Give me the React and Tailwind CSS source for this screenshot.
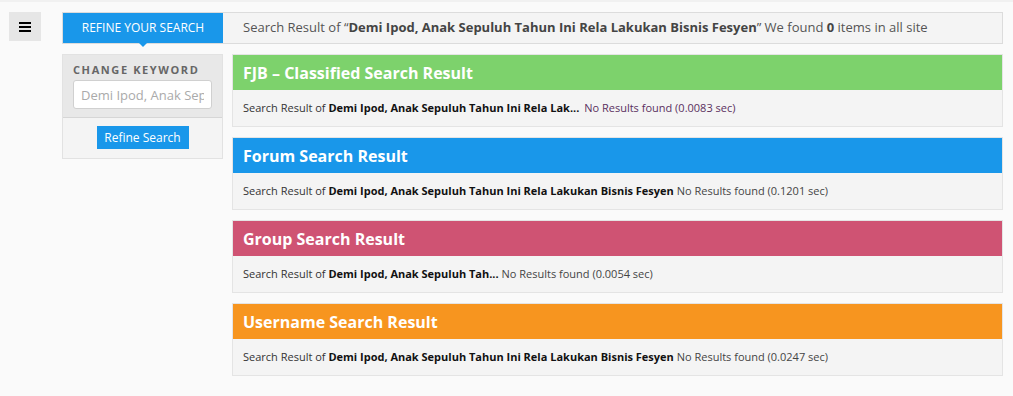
import React from "react";

const cards = [
  { title: "FJB – Classified Search Result", bg: "bg-[#7dd26c]", name: "Demi Ipod, Anak Sepuluh Tahun Ini Rela Lak...", time: "0.0083", purple: true },
  { title: "Forum Search Result", bg: "bg-[#1997ea]", name: "Demi Ipod, Anak Sepuluh Tahun Ini Rela Lakukan Bisnis Fesyen", time: "0.1201" },
  { title: "Group Search Result", bg: "bg-[#cf5373]", name: "Demi Ipod, Anak Sepuluh Tah...", time: "0.0054" },
  { title: "Username Search Result", bg: "bg-[#f7951f]", name: "Demi Ipod, Anak Sepuluh Tahun Ini Rela Lakukan Bisnis Fesyen", time: "0.0247" },
];

export default function App() {
  return (
    <div className="min-h-[396px] bg-[#fafafa] font-['Open_Sans',sans-serif] text-[#333]">
      <div className="h-[2px] bg-[#f1f1f1]" />
      <div className="flex pt-[10px]">
        <div className="ml-[9px] flex h-[29px] w-[32px] flex-col items-center justify-center gap-[2px] bg-[#e6e6e6]">
          <span className="block h-[2px] w-[12px] bg-black" />
          <span className="block h-[2px] w-[12px] bg-black" />
          <span className="block h-[2px] w-[12px] bg-black" />
        </div>
        <div className="ml-[21px] w-[941px]">
          <div className="flex h-[32px] border border-[#dcdcdc] bg-[#f4f4f4]">
            <div className="relative flex w-[160px] items-center justify-center bg-[#1997ea] text-[12px] text-white">
              REFINE YOUR SEARCH
              <span className="absolute left-1/2 top-full -ml-[4px] h-0 w-0 border-l-[4px] border-r-[4px] border-t-[4px] border-l-transparent border-r-transparent border-t-[#1997ea]" />
            </div>
            <div className="flex items-center pl-[20px] text-[13px] text-[#555]">
              <span>
                Search Result of “<b className="font-bold text-[#444]">Demi Ipod, Anak Sepuluh Tahun Ini Rela Lakukan Bisnis Fesyen</b>” We found <b className="font-bold text-[#444]">0</b> items in all site
              </span>
            </div>
          </div>
          <div className="mt-[10px] flex items-start gap-[9px]">
            <div className="w-[161px] border border-[#e2e2e2]">
              <div className="bg-[#e8e8e8] px-[10px] pb-[8px] pt-[8px]">
                <div className="text-[11px] font-bold tracking-[1.6px] text-[#666] leading-[14px]">CHANGE KEYWORD</div>
                <input
                  readOnly
                  placeholder="Demi Ipod, Anak Sepuluh Tahun Ini Rela Lakukan Bisnis Fesyen"
                  className="mt-[3px] block h-[29px] w-full rounded-[3px] border border-[#d0d0d0] bg-white px-[7px] text-[13px] text-[#aaa] placeholder:text-[#aaa] outline-none"
                />
              </div>
              <div className="flex justify-center border-t border-[#d6d6d6] bg-[#f4f4f4] pb-[9px] pt-[8px]">
                <div className="flex h-[23px] w-[92px] items-center justify-center bg-[#1997ea] text-[12px] text-white">
                  Refine Search
                </div>
              </div>
            </div>
            <div className="flex flex-1 flex-col gap-[10px]">
              {cards.map((c) => (
                <div key={c.title} className="border border-[#e4e4e4] bg-[#f4f4f4]">
                  <div className={`${c.bg} flex h-[35px] items-center px-[10px] text-[16px] font-bold text-white`}>
                    {c.title}
                  </div>
                  <div className="flex h-[36px] items-center px-[10px] text-[11px] text-[#333] whitespace-nowrap">
                    <span>
                      Search Result of <b className="font-bold text-[#111]">{c.name}</b>{" "}
                      <span className={c.purple ? "ml-[2px] text-[#5a3060]" : "text-[#444]"}>
                        No Results found ({c.time} sec)
                      </span>
                    </span>
                  </div>
                </div>
              ))}
            </div>
          </div>
        </div>
      </div>
    </div>
  );
}
